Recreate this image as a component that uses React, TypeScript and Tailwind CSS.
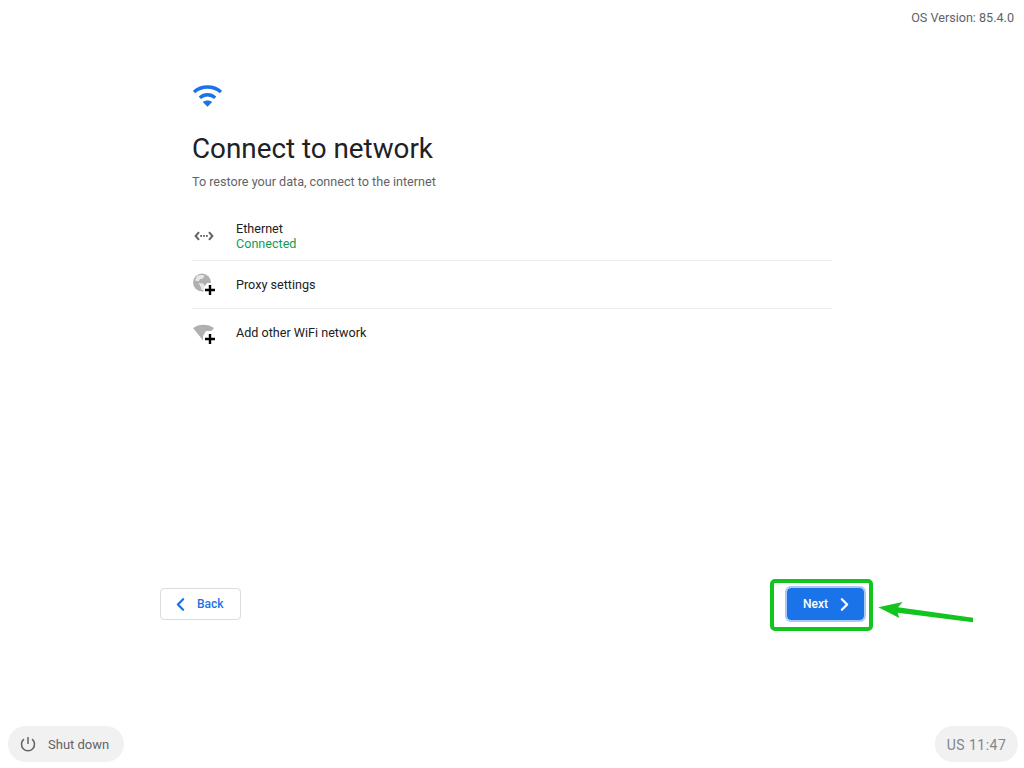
import { ChevronLeft, ChevronRight } from 'lucide-react'

function WifiIcon() {
  return (
    <svg width="31" height="22" viewBox="0 0 31 22" fill="none" className="block">
      <path d="M2 7 C9.5 0.4 21.5 0.4 29 7" stroke="#1a73e8" strokeWidth="3.4" />
      <path d="M7.8 12.8 C12.4 8.8 18.6 8.8 23.2 12.8" stroke="#1a73e8" strokeWidth="3.4" />
      <path d="M10.8 17 C13.4 15 17.6 15 20.2 17 L15.5 21.8 Z" fill="#1a73e8" />
    </svg>
  )
}

function EthernetIcon() {
  return (
    <svg width="24" height="24" viewBox="0 0 24 24" fill="none">
      <path d="M7 8.2 L3.6 12 L7 15.8" stroke="#5f6368" strokeWidth="2" />
      <path d="M17 8.2 L20.4 12 L17 15.8" stroke="#5f6368" strokeWidth="2" />
      <rect x="8.2" y="11" width="1.8" height="1.8" fill="#5f6368" />
      <rect x="11.1" y="11" width="1.8" height="1.8" fill="#5f6368" />
      <rect x="14" y="11" width="1.8" height="1.8" fill="#5f6368" />
    </svg>
  )
}

function Plus() {
  return <path d="M16.8 13h2.4v3.8H23v2.4h-3.8V23h-2.4v-3.8H13v-2.4h3.8z" fill="#000" />
}

function ProxyIcon() {
  return (
    <svg width="24" height="24" viewBox="0 0 24 24" fill="none">
      <circle cx="10" cy="10.5" r="9" fill="#b0b0b0" />
      <path d="M5 4 C7 3 11 2.5 12.5 3.5 L11 6.5 L8 7 L6.5 9.5 L3 8.5 Z" fill="#e8e8e8" />
      <path d="M6.5 11 L11 11.5 L13 14 L11 18 L9.5 18 L8.5 14.5 Z" fill="#e8e8e8" />
      <path d="M15 11 L24 11 L24 24 L11.5 24 L11.5 16 Z" fill="#fff" />
      <Plus />
    </svg>
  )
}

function WifiAddIcon() {
  return (
    <svg width="24" height="24" viewBox="0 0 24 24" fill="none">
      <path d="M1 7 C7 2.5 16 2.5 22 7 L11.5 20 Z" fill="#b0b0b0" />
      <path d="M14 10 L24 10 L24 24 L11 24 L11 15 Z" fill="#fff" />
      <Plus />
    </svg>
  )
}

function PowerIcon() {
  return (
    <svg width="20" height="20" viewBox="0 0 20 20" fill="none">
      <path d="M10 3 V10" stroke="#5f6368" strokeWidth="1.5" />
      <path d="M6 5.2 A6.5 6.5 0 1 0 14 5.2" stroke="#5f6368" strokeWidth="1.5" />
    </svg>
  )
}

const rows = [
  { icon: <EthernetIcon />, label: 'Ethernet', status: 'Connected' },
  { icon: <ProxyIcon />, label: 'Proxy settings' },
  { icon: <WifiAddIcon />, label: 'Add other WiFi network' },
]

export default function App() {
  return (
    <div className="relative flex h-[768px] w-[1024px] flex-col overflow-hidden bg-white font-['Roboto',sans-serif]">
      <div className="flex justify-end pr-[10px] pt-[10px] text-[12.6px] leading-[15px] text-[#5f6368]">
        OS Version: 85.4.0
      </div>

      <div className="flex flex-1 flex-col px-[160px] pt-[60px]">
        <div className="flex flex-1 flex-col px-[32px]">
          <WifiIcon />
          <h1 className="mt-[24px] text-[27.8px] leading-[36px] font-normal text-[#202124]">Connect to network</h1>
          <p className="mt-[5px] text-[12.6px] leading-[20px] text-[#5f6368]">To restore your data, connect to the internet</p>

          <div className="mt-[21px]">
            {rows.map((row, i) => (
              <div
                key={row.label}
                className={`flex h-[48px] items-center pb-[1px] ${i < rows.length - 1 ? 'border-b border-[#ebebeb]' : ''}`}
              >
                <div className="flex w-[44px] shrink-0">{row.icon}</div>
                <div className="text-[12.6px] leading-[15px] text-[#202124]">
                  <div>{row.label}</div>
                  {row.status && <div className="text-[#0f9d58]">{row.status}</div>}
                </div>
              </div>
            ))}
          </div>
        </div>

        <div className="flex items-center justify-between">
          <button className="flex h-[32px] w-[81px] items-center rounded-[4px] border border-[#dadce0] bg-white pl-[9px] text-[12px] font-medium text-[#1a73e8]">
            <ChevronLeft size={21} strokeWidth={2.6} className="mr-[6px]" />
            Back
          </button>
          <button className="flex h-[32px] w-[77px] items-center rounded-[4px] bg-[#1a73e8] pl-[16px] text-[12px] font-medium text-white outline-2 outline-[#a9c9f7]">
            Next
            <ChevronRight size={21} strokeWidth={2.6} className="ml-[6px]" />
          </button>
        </div>

        <div className="h-[106px]" />
      </div>

      <div className="flex items-center justify-between px-[6px] pb-[6px] pl-[8px]">
        <div className="flex h-[36px] w-[116px] items-center rounded-full bg-[#f1f1f1] pl-[10px] text-[13px] text-[#5f6368]">
          <PowerIcon />
          <span className="ml-[10px] pt-[2px]">Shut down</span>
        </div>
        <div className="flex h-[36px] w-[83px] items-center justify-center rounded-full bg-[#f1f1f1] pt-[2px] text-[14px] tracking-[0.5px] text-[#80868b]">
          US 11:47
        </div>
      </div>

      {/* annotation over the screenshot */}
      <div className="absolute left-[770px] top-[579px] h-[52px] w-[103px] rounded-[5px] border-[4px] border-[#12c41e]" />
      <svg className="absolute left-[875px] top-[598px]" width="102" height="26" viewBox="0 0 102 26">
        <path d="M3.3 9.3 L27.7 4 L23 9.3 L98 19.7 L98 24.3 L22.7 14.7 L24.3 20 Z" fill="#12c41e" />
      </svg>
    </div>
  )
}
